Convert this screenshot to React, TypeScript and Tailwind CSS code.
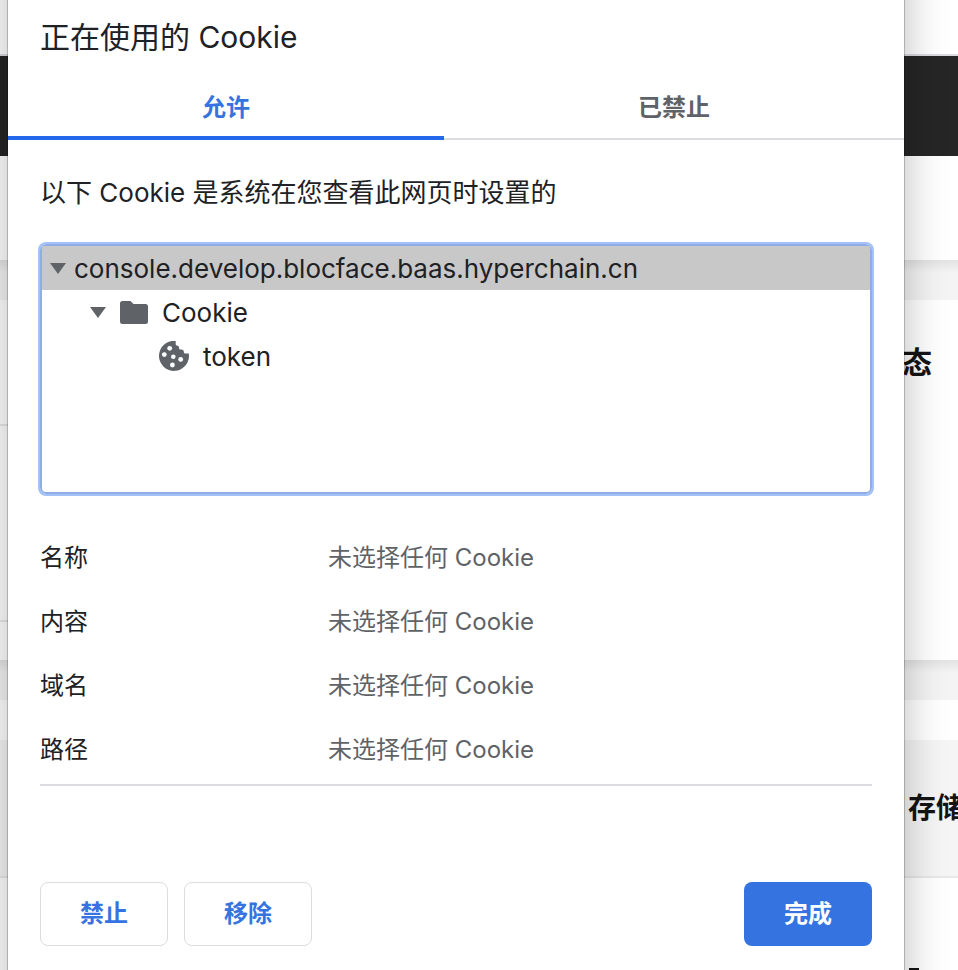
import { useState } from "react";

function Arrow() {
  return (
    <svg viewBox="0 0 16 11" className="h-[11px] w-4 shrink-0 fill-[#5f6368]" aria-hidden="true">
      <path d="M0 0h16L8 11z" />
    </svg>
  );
}

function FolderIcon() {
  return (
    <svg viewBox="0 0 28 24" className="h-6 w-7 shrink-0 fill-[#5f6368]" aria-hidden="true">
      <path d="M2.5 1H10.5L13.5 4H25.5A2.5 2.5 0 0 1 28 6.5V21.5A2.5 2.5 0 0 1 25.5 24H2.5A2.5 2.5 0 0 1 0 21.5V3.5A2.5 2.5 0 0 1 2.5 1Z" />
    </svg>
  );
}

function CookieIcon() {
  return (
    <svg viewBox="0 0 30 30" className="size-[30px] shrink-0" aria-hidden="true">
      <path
        className="fill-[#5f6368]"
        d="M16.7 0V3.2Q16.8 4.6 18 4.6Q20.3 4.7 20 7.2Q20.1 8.8 21.8 8.6Q24.8 8.5 24.8 11Q24.8 12.6 26.4 12.6H29.8A15 15 0 1 1 16.7 0Z"
      />
      <g className="fill-white">
        <circle cx="10.7" cy="7.3" r="2.4" />
        <circle cx="5.3" cy="13.6" r="2.4" />
        <circle cx="14.3" cy="15.7" r="2.3" />
        <circle cx="21.7" cy="18.4" r="2.4" />
        <circle cx="13.4" cy="24" r="2.4" />
      </g>
    </svg>
  );
}

function PageBehind() {
  return (
    <div className="absolute inset-0 flex flex-col overflow-hidden bg-white font-bold text-[#141414]" aria-hidden="true">
      <div className="h-14 shrink-0 border-b-2 border-[#dadce0]" />
      <div className="h-[100px] shrink-0 bg-[#262626]" />
      <div className="h-[104px] shrink-0" />
      <div className="h-10 shrink-0 bg-linear-to-b from-[#e2e2e2] via-[#f4f4f4] via-30% to-[#f4f4f4]" />
      <div className="flex h-[124px] shrink-0 items-center justify-end pr-[26px] text-[30px]">态</div>
      <div className="h-[198px] w-1/2 shrink-0 border-y-2 border-[#e8e8e8]" />
      <div className="h-[38px] shrink-0" />
      <div className="h-10 shrink-0 bg-linear-to-b from-[#e2e2e2] via-[#f4f4f4] via-30% to-[#f4f4f4]" />
      <div className="h-10 shrink-0" />
      <div className="flex h-[138px] shrink-0 items-center justify-end border-b-2 border-[#e8e8e8] bg-[#f5f5f5] text-[28px]">
        <span className="w-[50px] whitespace-nowrap">存储</span>
      </div>
      <div className="flex h-[92px] shrink-0 items-end justify-end pr-[39px]">
        <span className="h-0.5 w-2.5 bg-[#141414]" />
      </div>
    </div>
  );
}

const tabs = ["允许", "已禁止"];
const details = ["名称", "内容", "域名", "路径"];

export default function App() {
  const [active, setActive] = useState(0);
  return (
    <div className="relative flow-root min-h-screen overflow-hidden font-['Inter','Noto_Sans_CJK_SC',sans-serif] text-[#202124]">
      <PageBehind />
      <div
        role="dialog"
        aria-labelledby="dialog-title"
        className="relative -my-12 mr-[54px] ml-2 flex min-h-[calc(100vh+96px)] flex-col bg-white pt-12 pb-[72px] shadow-[0_0_0_1px_rgba(0,0,0,0.2),0_0_40px_0_rgba(0,0,0,0.28)]"
      >
        <h1 id="dialog-title" className="px-8 pt-4 text-[30px] leading-[42px]">
          正在使用的 Cookie
        </h1>

        <div role="tablist" className="mt-[18px] flex h-16 text-2xl font-semibold">
          {tabs.map((tab, i) => (
            <button
              key={tab}
              role="tab"
              aria-selected={active === i}
              onClick={() => setActive(i)}
              className={
                active === i
                  ? "flex-auto border-b-4 border-[#2469eb] pt-1 text-[#3574e0]"
                  : "flex-auto border-b-2 border-[#dadce0] pt-0.5 text-[#5f6368]"
              }
            >
              {tab}
            </button>
          ))}
        </div>

        <div className="px-8">
          <p className="pt-8 text-[26px] leading-[42px]">以下 Cookie 是系统在您查看此网页时设置的</p>

          <ul
            role="tree"
            className="mt-[30px] h-[250px] rounded-md border-2 border-[#8faee8] text-[26px] ring-2 ring-[#a4c2f7]"
          >
            <li role="treeitem" aria-selected="true" className="flex h-11 items-center gap-2 bg-[#c8c8c8] pl-2">
              <Arrow />
              console.develop.blocface.baas.hyperchain.cn
            </li>
            <li role="treeitem" className="flex h-11 items-center gap-3.5 pl-12">
              <Arrow />
              <FolderIcon />
              Cookie
            </li>
            <li role="treeitem" className="flex h-11 items-center gap-3.5 pl-[117px]">
              <CookieIcon />
              token
            </li>
          </ul>

          <dl className="mt-8 border-b-2 border-[#dadce0] pb-0.5 text-2xl">
            {details.map((name) => (
              <div key={name} className="flex h-16 items-center">
                <dt className="w-72">{name}</dt>
                <dd className="text-[#5f6368]">未选择任何 Cookie</dd>
              </div>
            ))}
          </dl>
        </div>

        <div className="mt-auto flex gap-4 px-8 text-2xl font-semibold text-[#3574e0]">
          <button className="h-16 w-32 rounded-lg border border-[#dadce0]">禁止</button>
          <button className="h-16 w-32 rounded-lg border border-[#dadce0]">移除</button>
          <button className="ml-auto h-16 w-32 rounded-lg bg-[#3574e0] text-white">完成</button>
        </div>
      </div>
    </div>
  );
}
